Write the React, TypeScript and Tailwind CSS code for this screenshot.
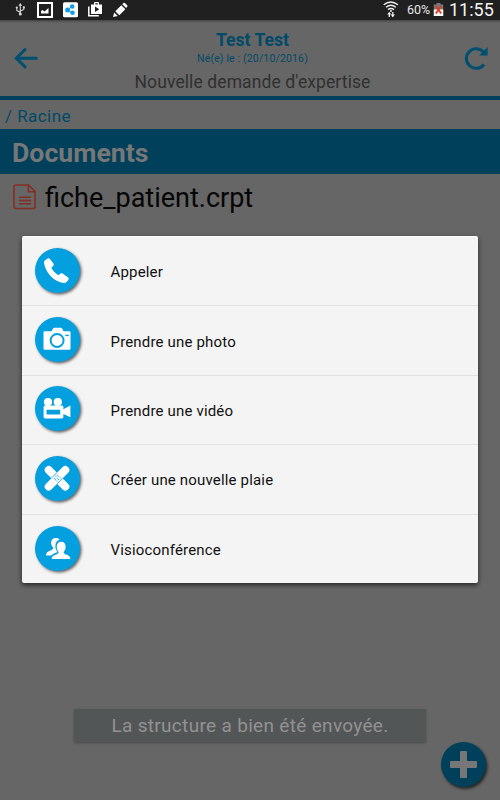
import React from 'react';

interface ActionItem {
  label: string;
  icon: React.ReactNode;
}

const PhoneIcon = () => (
  <svg viewBox="0 0 46 46" className="w-full h-full" fill="white">
    <path d="M9.300 15.800c-.5-1.700 .3-2.900 1.500-3.600l2.200-1.400c1-.6 1.900-.3 2.500.6l3.300 4.400c.6.9.5 1.900-.3 2.600l-1.800 1.800c1.400 3 3.700 5.500 7.200 7.600l2-1.500c.8-.6 1.800-.6 2.600 0l5 3.500c1.100.8 1.200 1.800.5 2.800l-1.800 2.200c-.8 1-1.900 1.300-3.300 1.100C18.500 33.600 11.200 25.200 9.300 15.800z" />
  </svg>
);

const CameraIcon = () => (
  <svg viewBox="0 0 46 46" className="w-full h-full">
    <path fill="white" d="M10 14.500h7l1.300-2.500q.5-1 1.600-1h6.400q1.100 0 1.600 1l1.300 2.500H35q1.300 0 1.300 1.300v16.300q0 1.300-1.300 1.300H10q-1.300 0-1.300-1.300V15.800q0-1.300 1.300-1.300z" />
    <circle cx="22.600" cy="24" r="6.600" fill="white" stroke="#049fdf" strokeWidth="2" />
    <path stroke="#049fdf" strokeWidth="1.500" d="M31 18.800h3.500" />
  </svg>
);

const VideoIcon = () => (
  <svg viewBox="0 0 46 46" className="w-full h-full" fill="white">
    <circle cx="13.300" cy="16.400" r="4.200" />
    <circle cx="23.300" cy="16.400" r="4.200" />
    <path fillRule="evenodd" d="M10.300 20h17.200q1.500 0 1.500 1.500v2.200l7.200-3.700v12L29 28.500v3.200q0 1.500-1.500 1.500H10.300q-1.500 0-1.500-1.500V21.500q0-1.500 1.500-1.500zm1.500 4.200v5h14v-5z" />
  </svg>
);

const PlasterIcon = () => (
  <svg viewBox="0 0 46 46" className="w-full h-full">
    <rect x="6.500" y="18.800" width="32" height="8" rx="3.800" fill="white" transform="rotate(45 22.500 22.800)" />
    <g transform="rotate(-45 22.500 22.800)">
      <rect x="6.500" y="18.800" width="32" height="8" rx="3.800" fill="white" />
      <path d="M18.500 18.600h8M18.500 27h8" stroke="#049fdf" strokeWidth="0.800" />
      <path d="M20 21h6M20 22.900h6M20 24.800h6" stroke="#049fdf" strokeWidth="1" strokeDasharray="1 1.300" />
    </g>
  </svg>
);

const PeopleIcon = () => (
  <svg viewBox="0 0 46 46" className="w-full h-full" fill="white">
    <path d="M25.200 14c-.8-1.200-2.100-1.800-3.900-1.800-2.900 0-4.800 1.900-4.800 4.900 0 2.300.9 4 2.200 5.200-.2 1.600-1.600 2.300-3.500 3-2.200.9-3.800 1.900-4.100 4.800h5.700c1.300-1.600 3-2.400 5.300-3.100.5-.2.800-.6.600-1-.8-1.200-1.900-2.900-1.900-5.300 0-3.400 1.400-6 4.400-6.700z" />
    <path d="M26.800 16.200c2.700 0 4.500 1.900 4.500 5 0 2.400-.9 4.100-2.100 5.300 0 1.700 1.800 2.300 3.400 2.900 2.100.8 3.500 2 3.500 4.400H17.100c0-2.400 1.500-3.600 3.600-4.400 1.700-.6 3.400-1.200 3.500-2.900-1.200-1.200-2-2.900-2-5.300 0-3.100 1.900-5 4.600-5z" />
  </svg>
);

const actions: ActionItem[] = [
  { label: 'Appeler', icon: <PhoneIcon /> },
  { label: 'Prendre une photo', icon: <CameraIcon /> },
  { label: 'Prendre une vidéo', icon: <VideoIcon /> },
  { label: 'Créer une nouvelle plaie', icon: <PlasterIcon /> },
  { label: 'Visioconférence', icon: <PeopleIcon /> },
];

const StatusBar = () => (
  <div className="h-5 shrink-0 bg-[#202020] text-white flex items-center justify-between pl-[15px] pr-[7px]">
    <svg width="115" height="20" viewBox="15 0 115 20" fill="none">
      {/* usb */}
      <path d="M20.300 4v11M20.300 12.500L16.800 10.500V7.500M20.300 11l3.500-1.500V7" stroke="#d8d8d8" strokeWidth="1.100" />
      <path d="M18.500 5.800l1.800-2.800 1.800 2.800z" fill="#d8d8d8" />
      <circle cx="20.300" cy="14" r="1.500" fill="#d8d8d8" />
      <circle cx="16.800" cy="7.500" r="1.100" fill="#d8d8d8" />
      <path d="M22.800 6.300h2v2h-2z" fill="#d8d8d8" />
      {/* screenshot */}
      <rect x="38" y="3" width="14" height="14" stroke="white" strokeWidth="2" />
      <path d="M41 13.500V11l1.500-1 2 1.500 4-3.500v5.500z" fill="white" />
      {/* share */}
      <rect x="63" y="2.200" width="15" height="15" rx="1.500" fill="white" />
      <path d="M67.500 10l4-3.500M67.500 10l4.500 3" stroke="#159ce6" strokeWidth="1" />
      <circle cx="67.600" cy="10" r="2.500" fill="#159ce6" />
      <circle cx="72.200" cy="6.500" r="2.300" fill="#159ce6" />
      <circle cx="72.500" cy="12.800" r="2.300" fill="#159ce6" />
      {/* play store */}
      <path d="M88.800 6.500v9.300h10" stroke="white" strokeWidth="1.500" />
      <path fill="white" fillRule="evenodd" d="M91 4.500h3V3q0-1 1-1h3q1 0 1 1v1.500h3V14H91zm4.300 0h2.500v-1.300h-2.500zM95 6.500v5.500l4.300-2.800z" />
      {/* pencil */}
      <path fill="white" d="M113 17l1.200-4.500 3.500 3.400zM115.300 11.200l6-6 4 4-6 6zM122.300 4.200l1.200-1.200q.7-.7 1.400 0l2.300 2.300q.7.700 0 1.400l-1.100 1.300z" />
    </svg>
    <div className="flex items-center h-5">
      <svg width="16" height="20" viewBox="0 0 16 20" fill="none" className="mr-[8px]" stroke="#eee">
        <path d="M.7 4.700q7-5.500 14.200 0M3 7.200q5-4 9.800 0M5 9.600q3-2.300 6 0" strokeWidth="1.400" />
        <circle cx="8" cy="11" r="1" fill="#eee" stroke="none" />
        <path d="M6.300 17v-4M9.800 12v4" strokeWidth="1.300" />
        <path d="M4.200 14.500l2.100-2.800 2.100 2.800zM7.700 14.500l2.100 2.900 2.100-2.900z" fill="#eee" stroke="none" />
      </svg>
      <span className="text-[12.5px] leading-5 w-[25px] whitespace-nowrap text-[#e8e8e8]">60%</span>
      <svg width="11" height="20" viewBox="0 0 10 20" className="mx-[1px]">
        <path d="M3 3h4v1.500h2.700V16H.3V4.500H3z" fill="#777" />
        <path d="M.3 9.500h9.400V16H.3z" fill="white" />
        <path d="M2.300 6l5.400 7.500M7.700 6l-5.400 7.500" stroke="#df3b27" strokeWidth="1.900" />
      </svg>
      <span className="text-[18px] leading-5 ml-[4px] w-[44px] whitespace-nowrap text-[#f2f2f2]">11:55</span>
    </div>
  </div>
);

const Header = () => (
  <div className="h-20 shrink-0 bg-[linear-gradient(#454545,#666_3px)] border-b-4 border-[#00405a] flex justify-between">
    <svg width="63" height="76" viewBox="0 0 63 76" fill="none" stroke="#004f6e" strokeWidth="3" strokeLinecap="round">
      <path d="M16.300 38.200h20M25 29.500l-8.700 8.700 8.700 8.700" />
    </svg>
    <div className="flex flex-col items-center whitespace-nowrap pt-[9px]">
      <div className="text-[17.6px] leading-[22px] font-bold text-[#004a68]">Test Test</div>
      <div className="text-[10.5px] leading-[14px] tracking-[0.150px] text-[#004a68] mt-px">Né(e) le : (20/10/2016)</div>
      <div className="text-[17.5px] leading-[22px] mt-[5px] tracking-[0.100px] text-[#303030]">Nouvelle demande d'expertise</div>
    </div>
    <svg width="58" height="76" viewBox="442 20 58 76" fill="none">
      <path d="M483.500 52a9.800 9.800 0 1 0 .5 12.500" stroke="#004f6e" strokeWidth="3" />
      <path d="M487.600 47v8.400h-8.400z" fill="#004f6e" />
    </svg>
  </div>
);

const ActionDialog = () => (
  <div className="absolute left-[22px] top-[236px] w-[456px] h-[347px] rounded-[2px] bg-[#f4f4f4] border-t border-white shadow-[0_2px_5px_rgba(0,0,0,0.65)]">
    {actions.map((action, i) => (
      <div
        key={action.label}
        className={`h-[69.4px] flex items-center ${i < actions.length - 1 ? 'border-b border-[#e1e1e1]' : ''}`}
      >
        <div className="ml-[12.5px] mr-[31px] -mt-[2px] w-[45px] h-[45px] rounded-full bg-[#049fdf] shadow-[1.5px_1.5px_3px_rgba(0,0,0,0.6)]">
          {action.icon}
        </div>
        <span className="text-[15px] leading-5 mt-[2px] tracking-[0.170px] text-[#111] whitespace-nowrap">{action.label}</span>
      </div>
    ))}
  </div>
);

export default function App() {
  return (
    <div className="relative w-[500px] h-[800px] overflow-hidden bg-[#666] font-['Roboto',sans-serif] flex flex-col">
      <StatusBar />
      <Header />
      <div className="h-[29px] pl-[5px] text-[17px] leading-[33px] tracking-[0.450px] text-[#004a68]">/ Racine</div>
      <div className="h-[45px] pl-[12px] bg-[#00405a] text-[26.7px] leading-[49px] font-bold text-[#777]">Documents</div>
      <div className="h-[52px] pl-[13px] flex items-center">
        <svg width="24" height="26" viewBox="0 0 24 26" fill="none" stroke="#832f25" strokeWidth="1.600" className="-mt-[7px]">
          <path d="M2.700 1h12.800L22 7.500v15.300q0 1.700-1.700 1.700H2.700Q1 24.500 1 22.800V2.700Q1 1 2.700 1z" />
          <path d="M15.300 1v6.700H22M6 13.200h12M6 16.500h12M6 19.800h12" />
        </svg>
        <span className="ml-2 -mt-[4px] text-[27px] leading-8 text-[#050505] whitespace-nowrap">fiche_patient.crpt</span>
      </div>

      <div className="absolute left-[74px] top-[709px] w-[352px] h-[33px] bg-[#525657] shadow-[0_1px_2px_#474a4b] text-center text-[19px] leading-[34px] tracking-[0.320px] text-[#929292] whitespace-nowrap">
        La structure a bien été envoyée.
      </div>

      <button className="absolute left-[441px] top-[742px] w-[45px] h-[45px] rounded-full bg-[#00405a] shadow-[1.5px_2px_3px_rgba(0,0,0,0.65)]">
        <svg viewBox="0 0 45 45" className="w-full h-full" fill="#777">
          <path d="M20 9h5q1 0 1 1v9h9q1 0 1 1v5q0 1-1 1h-9v9q0 1-1 1h-5q-1 0-1-1v-9h-9q-1 0-1-1v-5q0-1 1-1h9v-9q0-1 1-1z" />
        </svg>
      </button>

      <ActionDialog />
    </div>
  );
}
